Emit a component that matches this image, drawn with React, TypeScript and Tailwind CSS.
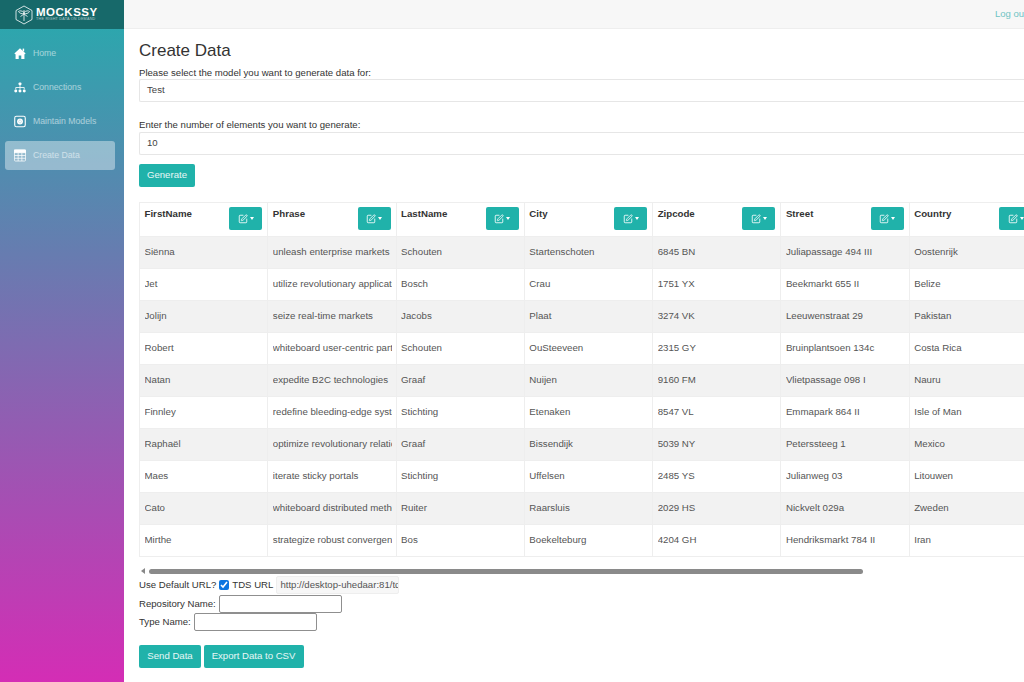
import { SquarePen } from "lucide-react";

const columns = ["FirstName", "Phrase", "LastName", "City", "Zipcode", "Street", "Country"];

const rows = [
  ["Siënna", "unleash enterprise markets", "Schouten", "Startenschoten", "6845 BN", "Juliapassage 494 III", "Oostenrijk"],
  ["Jet", "utilize revolutionary applications", "Bosch", "Crau", "1751 YX", "Beekmarkt 655 II", "Belize"],
  ["Jolijn", "seize real-time markets", "Jacobs", "Plaat", "3274 VK", "Leeuwenstraat 29", "Pakistan"],
  ["Robert", "whiteboard user-centric partnerships", "Schouten", "OuSteeveen", "2315 GY", "Bruinplantsoen 134c", "Costa Rica"],
  ["Natan", "expedite B2C technologies", "Graaf", "Nuijen", "9160 FM", "Vlietpassage 098 I", "Nauru"],
  ["Finnley", "redefine bleeding-edge systems", "Stichting", "Etenaken", "8547 VL", "Emmapark 864 II", "Isle of Man"],
  ["Raphaël", "optimize revolutionary relationships", "Graaf", "Bissendijk", "5039 NY", "Peterssteeg 1", "Mexico"],
  ["Maes", "iterate sticky portals", "Stichting", "Uffelsen", "2485 YS", "Julianweg 03", "Litouwen"],
  ["Cato", "whiteboard distributed methodologies", "Ruiter", "Raarsluis", "2029 HS", "Nickvelt 029a", "Zweden"],
  ["Mirthe", "strategize robust convergence", "Bos", "Boekelteburg", "4204 GH", "Hendriksmarkt 784 II", "Iran"],
];

function HomeIcon() {
  return (
    <svg width="13" height="13" viewBox="0 0 13 13" fill="currentColor">
      <path d="M6.5 0.8 L12.6 6.4 L11.7 7.3 L11.3 7 V12.4 H7.9 V8.6 H5.1 V12.4 H1.7 V7 L1.3 7.3 L0.4 6.4 Z" />
      <rect x="9.4" y="1.2" width="1.6" height="3" />
    </svg>
  );
}

function SitemapIcon() {
  return (
    <svg width="13" height="13" viewBox="0 0 13 13" fill="currentColor">
      <rect x="5" y="1" width="3" height="3" rx="0.8" />
      <circle cx="1.9" cy="10.4" r="1.6" />
      <circle cx="6.5" cy="10.4" r="1.6" />
      <circle cx="11.1" cy="10.4" r="1.6" />
      <path d="M6.5 4 V8.5 M1.9 8.5 V6.5 H11.1 V8.5" fill="none" stroke="currentColor" strokeWidth="0.9" />
    </svg>
  );
}

function ModelIcon() {
  return (
    <svg width="13" height="13" viewBox="0 0 13 13" fill="none">
      <rect x="0.8" y="0.8" width="11.4" height="11.4" rx="1.8" stroke="currentColor" strokeWidth="1.2" />
      <circle cx="6.5" cy="6.5" r="3.2" fill="currentColor" />
      <circle cx="6.5" cy="6.5" r="1.5" stroke="#4a9aae" strokeWidth="0.5" strokeDasharray="0.8 0.6" />
    </svg>
  );
}

function GridIcon() {
  return (
    <svg width="13" height="13" viewBox="0 0 13 13" fill="none" stroke="currentColor" strokeWidth="0.8">
      <rect x="0.5" y="0.5" width="12" height="12" rx="1" />
      <rect x="0.5" y="0.5" width="12" height="3" fill="currentColor" />
      <path d="M4.5 3.5 V12.5 M8.5 3.5 V12.5 M0.5 6.5 H12.5 M0.5 9.5 H12.5" />
    </svg>
  );
}

function Logo() {
  return (
    <svg width="18" height="20" viewBox="0 0 18 20" fill="none" stroke="white" strokeWidth="0.8">
      <path d="M9 1 L17 5.5 V14.5 L9 19 L1 14.5 V5.5 Z" />
      <path d="M9 5 V16 M9 7.5 C7 5.5 4.5 5.5 3.5 6.5 C4.5 8.5 7 9 9 8.5 C11 9 13.5 8.5 14.5 6.5 C13.5 5.5 11 5.5 9 7.5 Z M9 9 L5.5 11.5 M9 9 L12.5 11.5" />
    </svg>
  );
}

export default function App() {
  const nav = [
    { label: "Home", icon: <HomeIcon /> },
    { label: "Connections", icon: <SitemapIcon /> },
    { label: "Maintain Models", icon: <ModelIcon /> },
    { label: "Create Data", icon: <GridIcon />, active: true },
  ];

  return (
    <div className="flex h-[682px] w-[1024px] overflow-hidden bg-white font-['Liberation_Sans',sans-serif] text-[9.6px] text-[#333]">
      {/* Sidebar */}
      <aside className="flex w-[124px] shrink-0 flex-col bg-linear-to-b/srgb from-[#26abad] to-[#d42db5]">
        <div className="flex h-[29px] items-center gap-[3px] bg-[#17696a] pl-[15px]">
          <Logo />
          <div className="flex flex-col leading-none text-white">
            <span className="text-[11.5px] font-bold tracking-[0.5px]">MOCKSSY</span>
            <span className="text-[3.7px] tracking-[0.25px] opacity-60">THE RIGHT DATA ON DEMAND</span>
          </div>
        </div>
        <nav className="flex flex-col gap-[5px] pl-[5px] pr-[9px] pt-[10px]">
          {nav.map((item) => (
            <div
              key={item.label}
              className={`flex h-[29px] items-center gap-[7px] rounded-[3px] pl-[9px] text-[8.7px] text-white/55 ${item.active ? "bg-white/40" : ""}`}
            >
              <span className="flex w-[12px] justify-center text-white">{item.icon}</span>
              <span>{item.label}</span>
            </div>
          ))}
        </nav>
      </aside>

      {/* Main */}
      <div className="flex min-w-0 flex-1 flex-col">
        <header className="flex h-[29px] shrink-0 justify-end overflow-hidden border-b border-[#eee] bg-[#f7f7f7] pt-[7px] text-[9.5px] text-[#6fc4c4]">
          <span className="w-[29px] shrink-0 overflow-hidden whitespace-nowrap">Log out</span>
        </header>

        <main className="flex flex-col px-[15px]">
          <h1 className="mt-[12px] text-[17px] leading-[20px]">Create Data</h1>

          <label className="mt-[6px] leading-[12px]">Please select the model you want to generate data for:</label>
          <div className="-mr-[15px] flex h-[23px] items-center rounded-l-[2px] border border-r-0 border-[#e6e6e6] pl-[7px] text-[#444]">Test</div>

          <label className="mt-[17px] leading-[12px]">Enter the number of elements you want to generate:</label>
          <div className="-mr-[15px] mt-[1px] flex h-[23px] items-center rounded-l-[2px] border border-r-0 border-[#e6e6e6] pl-[7px] text-[#444]">10</div>

          <button className="mt-[9px] h-[23px] w-[56px] rounded-[2px] bg-[#20b2aa] text-white/90">Generate</button>

          {/* Results table, wider than the page */}
          <div className="-mr-[15px] mt-[15px] overflow-hidden">
            <table className="w-[899px] table-fixed border-collapse text-[9.7px] text-[#555]">
              <thead>
                <tr className="h-[34px]">
                  {columns.map((col) => (
                    <th key={col} className="border border-[#eee] pl-[4.5px] pr-[5px] pt-[4px] align-top">
                      <div className="flex items-start justify-between">
                        <span className="font-bold text-[#333]">{col}</span>
                        <span className="flex h-[23px] w-[33px] items-center justify-center gap-[2px] rounded-[2px] bg-[#20b2aa] text-white">
                          <SquarePen size={10} />
                          <span className="h-0 w-0 border-x-[2.5px] border-t-[3px] border-x-transparent border-t-white" />
                        </span>
                      </div>
                    </th>
                  ))}
                </tr>
              </thead>
              <tbody>
                {rows.map((row, i) => (
                  <tr key={row[0]} className={`h-[32px] ${i % 2 === 0 ? "bg-[#f2f2f2]" : "bg-white"}`}>
                    {row.map((cell, j) => (
                      <td key={j} className="border border-[#eee] pl-[4.5px] pr-[4px]">
                        <div className="overflow-hidden whitespace-nowrap">{cell}</div>
                      </td>
                    ))}
                  </tr>
                ))}
              </tbody>
            </table>
          </div>

          {/* Scroll bar of the table */}
          <div className="mt-[11px] flex h-[6px] items-center gap-[4px] pl-[2px]">
            <span className="h-0 w-0 border-y-[3px] border-r-[4px] border-y-transparent border-r-[#888]" />
            <span className="h-[5px] w-[714px] rounded-full bg-[#8a8a8a]" />
          </div>

          <div className="mt-[2px] flex h-[18px] items-center">
            <span>Use Default URL?</span>
            <input type="checkbox" defaultChecked className="ml-[3px] h-[10px] w-[10px] accent-[#0b75e0]" />
            <span className="ml-[3px]">TDS URL</span>
            <div className="ml-[3px] flex h-[18px] w-[123px] items-center overflow-hidden whitespace-nowrap rounded-[2px] border border-[#eee] bg-[#f7f7f7] px-[3px] text-[#555]">
              http://desktop-uhedaar:81/tds
            </div>
          </div>
          <div className="mt-[1px] flex h-[18px] items-center">
            <span>Repository Name:</span>
            <div className="ml-[3px] h-[18px] w-[123px] rounded-[2px] border border-[#8f8f8f]" />
          </div>
          <div className="flex h-[18px] items-center">
            <span>Type Name:</span>
            <div className="ml-[3px] h-[18px] w-[123px] rounded-[2px] border border-[#8f8f8f]" />
          </div>

          <div className="mt-[14px] flex gap-[2.5px]">
            <button className="h-[23px] w-[62px] rounded-[2px] bg-[#20b2aa] text-white/90">Send Data</button>
            <button className="h-[23px] w-[100px] rounded-[2px] bg-[#20b2aa] text-white/90">Export Data to CSV</button>
          </div>
        </main>
      </div>
    </div>
  );
}
